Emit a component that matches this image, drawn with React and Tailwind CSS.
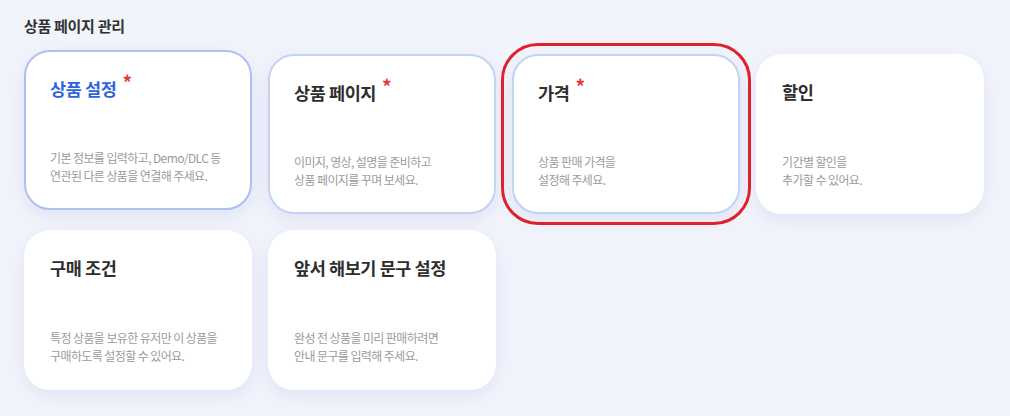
import React from "react";

const cards = [
  {
    title: "상품 설정",
    desc: ["기본 정보를 입력하고, Demo/DLC 등", "연관된 다른 상품을 연결해 주세요."],
    required: true,
    active: true,
  },
  {
    title: "상품 페이지",
    desc: ["이미지, 영상, 설명을 준비하고", "상품 페이지를 꾸며 보세요."],
    required: true,
  },
  {
    title: "가격",
    desc: ["상품 판매 가격을", "설정해 주세요."],
    required: true,
    marked: true,
  },
  {
    title: "할인",
    desc: ["기간별 할인을", "추가할 수 있어요."],
  },
  {
    title: "구매 조건",
    desc: ["특정 상품을 보유한 유저만 이 상품을", "구매하도록 설정할 수 있어요."],
  },
  {
    title: "앞서 해보기 문구 설정",
    desc: ["완성 전 상품을 미리 판매하려면", "안내 문구를 입력해 주세요."],
  },
];

const Card = ({ card }) => {
  let border = "border-2 border-transparent";
  if (card.required) border = "border-2 border-[#c3d3f3]";
  if (card.active) border = "border-2 border-[#abc2f0] -translate-y-1";

  return (
    <div
      className={`h-[160px] rounded-[26px] bg-white ${border} shadow-[0_6px_18px_rgba(110,130,200,0.14)] px-6 pt-[26px] pb-[23px] flex flex-col justify-between ${
        card.marked ? "outline-[3px] outline-offset-[8px] outline-[#e0202a]" : ""
      }`}
    >
      <h3
        className={`text-[17.5px] leading-5 font-bold tracking-[-0.4px] ${
          card.active ? "text-[#2c66dc]" : "text-[#2e2e2e]"
        }`}
      >
        {card.title}
        {card.required && (
          <span className="ml-1.5 text-[#e33b3b] text-[19px] relative -top-1.5">*</span>
        )}
      </h3>
      <div className="text-[12px] leading-[18px] text-[#9b9b9b] tracking-[-0.6px]">
        {card.desc.map((line) => (
          <p key={line}>{line}</p>
        ))}
      </div>
    </div>
  );
};

const App = () => {
  return (
    <div
      className="w-[1010px] h-[416px] bg-[#f2f4fc] px-6 pt-4 overflow-hidden"
      style={{ fontFamily: '"Noto Sans CJK KR", "Noto Sans", sans-serif' }}
    >
      <h2 className="text-[15px] leading-5 font-bold text-[#333] mb-[18px] tracking-[-0.3px]">
        상품 페이지 관리
      </h2>
      <div className="grid grid-cols-[repeat(4,228px)] gap-4">
        {cards.map((card) => (
          <Card key={card.title} card={card} />
        ))}
      </div>
    </div>
  );
};

export default App;
